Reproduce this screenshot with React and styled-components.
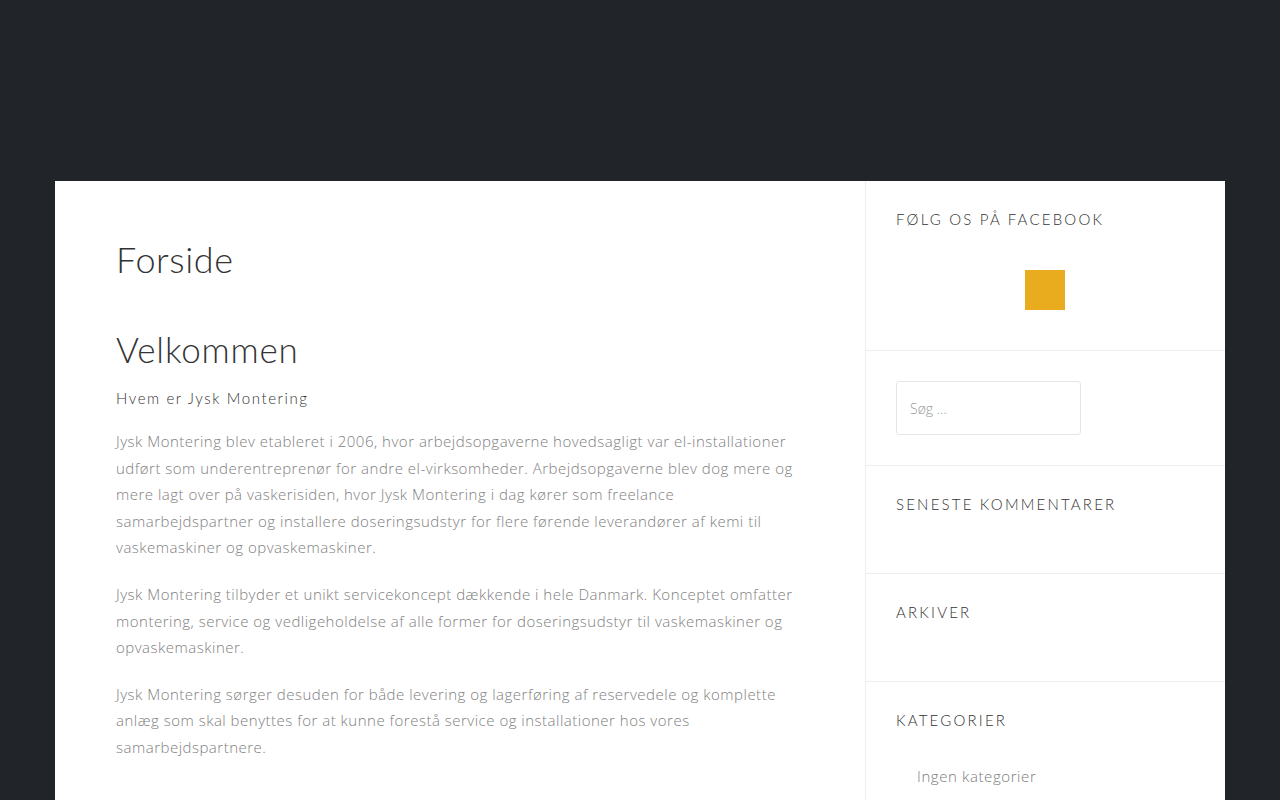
import React from 'react'
import styled, { createGlobalStyle } from 'styled-components'

const GlobalStyle = createGlobalStyle`
  html, body {
    margin: 0;
    padding: 0;
    background: #212529;
  }
  * { box-sizing: border-box; }
`

const Page = styled.div`
  min-height: 800px;
  padding: 181px 55px 0;
`

const Container = styled.div`
  background: #fff;
  display: flex;
  min-height: 619px;
`

const Main = styled.main`
  width: 810px;
  padding: 52px 60px 40px 61px;
`

const PageTitle = styled.h1`
  font-family: Lato, "Open Sans", sans-serif;
  font-weight: 300;
  font-size: 36px;
  line-height: 52px;
  color: #333;
  margin: 0 0 38px;
  letter-spacing: 0.6px;
`

const Heading = styled.h2`
  font-family: Lato, "Open Sans", sans-serif;
  font-weight: 300;
  font-size: 35px;
  line-height: 52px;
  color: #333;
  margin: 0 0 12px;
  letter-spacing: 0.8px;
`

const SubHeading = styled.h4`
  font-family: Lato, "Open Sans", sans-serif;
  font-weight: 300;
  font-size: 15px;
  line-height: 22px;
  letter-spacing: 1.6px;
  color: #333;
  margin: 0 0 19px;
`

const Paragraph = styled.p`
  font-family: "Open Sans", sans-serif;
  font-weight: 300;
  font-size: 15px;
  line-height: 26.6px;
  letter-spacing: 0.5px;
  color: #808080;
  margin: 0 0 20px;
`

const Sidebar = styled.aside`
  width: 360px;
  border-left: 1px solid #eee;
`

const Widget = styled.section`
  padding: 30px 30px ${({ bottom }) => bottom}px;
  border-bottom: 1px solid #eee;
  &:last-child { border-bottom: none; }
`

const WidgetTitle = styled.h3`
  font-family: Lato, "Open Sans", sans-serif;
  font-weight: 300;
  font-size: 15px;
  line-height: 16px;
  letter-spacing: 2.2px;
  text-transform: uppercase;
  color: #333;
  margin: 0 0 ${({ gap }) => gap}px;
`

const FacebookBox = styled.div`
  display: flex;
  justify-content: center;
  padding-right: 2px;
`

const FacebookSquare = styled.div`
  width: 40px;
  height: 40px;
  background: #eaac1f;
`

const SearchInput = styled.input`
  width: 185px;
  height: 54px;
  border: 1px solid #e6e6e6;
  border-radius: 3px;
  padding: 0 13px;
  font-family: "Open Sans", sans-serif;
  font-weight: 300;
  font-size: 14px;
  color: #999;
  outline: none;
  &::placeholder { color: #9a9a9a; }
`

const List = styled.ul`
  list-style: none;
  margin: 0;
  padding: 0 0 0 21px;
`

const ListItem = styled.li`
  font-family: "Open Sans", sans-serif;
  font-weight: 300;
  font-size: 15px;
  line-height: 26px;
  letter-spacing: 0.6px;
  color: #7d7d7d;
`

export default function App() {
  return (
    <Page>
      <GlobalStyle />
      <Container>
        <Main>
          <PageTitle>Forside</PageTitle>
          <Heading>Velkommen</Heading>
          <SubHeading>Hvem er Jysk Montering</SubHeading>
          <Paragraph>
            Jysk Montering blev etableret i 2006, hvor arbejdsopgaverne hovedsagligt var el-installationer udført som underentreprenør for andre el-virksomheder. Arbejdsopgaverne blev dog mere og mere lagt over på vaskerisiden, hvor Jysk Montering i dag kører som freelance samarbejdspartner og installere doseringsudstyr for flere førende leverandører af kemi til vaskemaskiner og opvaskemaskiner.
          </Paragraph>
          <Paragraph>
            Jysk Montering tilbyder et unikt servicekoncept dækkende i hele Danmark. Konceptet omfatter montering, service og vedligeholdelse af alle former for doseringsudstyr til vaskemaskiner og opvaskemaskiner.
          </Paragraph>
          <Paragraph>
            Jysk Montering sørger desuden for både levering og lagerføring af reservedele og komplette anlæg som skal benyttes for at kunne forestå service og installationer hos vores samarbejdspartnere.
          </Paragraph>
        </Main>
        <Sidebar>
          <Widget bottom={40}>
            <WidgetTitle gap={43}>Følg os på Facebook</WidgetTitle>
            <FacebookBox>
              <FacebookSquare />
            </FacebookBox>
          </Widget>
          <Widget bottom={30}>
            <SearchInput placeholder="Søg …" />
          </Widget>
          <Widget bottom={30}>
            <WidgetTitle gap={31}>Seneste kommentarer</WidgetTitle>
          </Widget>
          <Widget bottom={30}>
            <WidgetTitle gap={31}>Arkiver</WidgetTitle>
          </Widget>
          <Widget bottom={30}>
            <WidgetTitle gap={35}>Kategorier</WidgetTitle>
            <List>
              <ListItem>Ingen kategorier</ListItem>
            </List>
          </Widget>
        </Sidebar>
      </Container>
    </Page>
  )
}
